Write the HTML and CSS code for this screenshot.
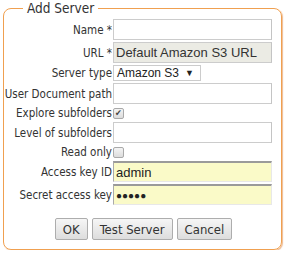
FILE: index.html
```html
<!DOCTYPE html>
<html lang="en">
<head>
    <meta charset="UTF-8">
    <title>Add Server</title>
    <link rel="stylesheet" href="styles.css">
</head>
<body>
    <fieldset class="server-box">
        <legend>Add Server</legend>
        <div class="form-grid">
            <label>Name *</label>
            <input type="text" class="field">

            <label>URL *</label>
            <input type="text" class="field field-disabled" value="Default Amazon S3 URL" disabled>

            <label>Server type</label>
            <div class="select-box"><span>Amazon S3</span><span class="arrow">&#9660;</span></div>

            <label>User Document path</label>
            <input type="text" class="field">

            <label>Explore subfolders</label>
            <div class="check-cell"><span class="check checked">&#10004;</span></div>

            <label>Level of subfolders</label>
            <input type="text" class="field">

            <label>Read only</label>
            <div class="check-cell"><span class="check"></span></div>

            <label>Access key ID</label>
            <input type="text" class="field field-auto" value="admin">

            <label>Secret access key</label>
            <input type="text" class="field field-auto pw" value="&#9679;&#9679;&#9679;&#9679;&#9679;">
        </div>

        <div class="buttons">
            <button class="btn">OK</button>
            <button class="btn">Test Server</button>
            <button class="btn">Cancel</button>
        </div>
    </fieldset>
</body>
</html>
```

FILE: styles.css
```css
body {
    margin: 0;
    padding: 1px 4px 0 3px;
    background: #fff;
    font-family: "DejaVu Sans Condensed", "Liberation Sans", sans-serif;
    color: #333;
}

.server-box {
    margin: 0;
    padding: 0 8px 9px 0;
    width: 269px;
    border: 1px solid #f0a050;
    border-radius: 8px;
    box-shadow: 1px 1px 1px rgba(220, 120, 40, 0.5);
}

.server-box legend {
    margin-left: 19px;
    padding: 0 4px;
    font-size: 13.5px;
    color: #333;
    line-height: 15px;
}

.form-grid {
    display: grid;
    grid-template-columns: 108px 159px;
    column-gap: 1px;
    row-gap: 2px;
    align-items: center;
    margin-top: 3px;
}

.form-grid label {
    text-align: right;
    font-size: 11.5px;
    white-space: nowrap;
}

.field {
    box-sizing: border-box;
    height: 21px;
    width: 159px;
    margin: 0;
    padding: 0 2px;
    border: 1px solid #ccc;
    border-right-color: #c4c4c4;
    background: #fff;
    font-family: "Liberation Sans", sans-serif;
    font-size: 13px;
    color: #222;
}

.field-disabled {
    background: #ebebe4;
    color: #333;
}

.field-auto {
    background: #fafac8;
    border: 1px solid #e8e8e8;
    border-top: 2px solid #9a9a9a;
    border-left: 1px solid #aaa;
}

.pw {
    font-size: 10px;
    letter-spacing: 0;
}

.select-box {
    box-sizing: border-box;
    width: 88px;
    height: 16px;
    border: 1px solid #ccc;
    display: flex;
    align-items: center;
    justify-content: space-between;
    padding: 0 6px 0 3px;
    font-family: "Liberation Sans", sans-serif;
    font-size: 12px;
    color: #222;
}

.select-box .arrow {
    font-size: 9px;
}

.check-cell {
    height: 13px;
    display: flex;
    align-items: center;
}

.check {
    box-sizing: border-box;
    width: 11px;
    height: 11px;
    border: 1px solid #a9a9a9;
    border-radius: 2px;
    background: linear-gradient(#f4f4f4, #dcdcdc);
    font-size: 9px;
    line-height: 9px;
    text-align: center;
    color: #444;
}

.buttons {
    display: flex;
    justify-content: center;
    gap: 4px;
    margin-top: 13px;
    padding-left: 10px;
}

.btn {
    height: 22px;
    padding: 0 7px;
    border: 1px solid #adadad;
    border-radius: 2px;
    background: linear-gradient(#f6f6f6, #dddddd);
    font-family: "DejaVu Sans Condensed", "Liberation Sans", sans-serif;
    font-size: 13px;
    color: #333;
}
```
